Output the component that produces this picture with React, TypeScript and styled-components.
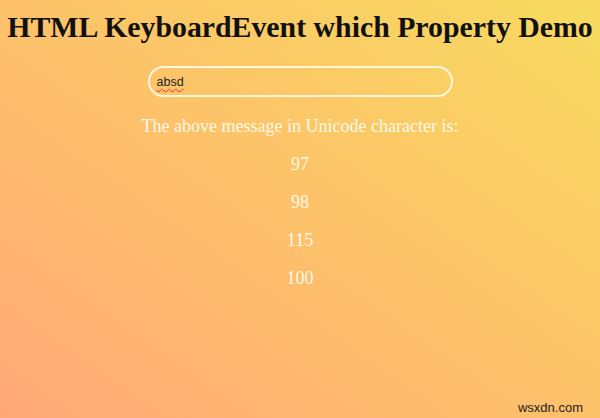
import React from 'react';
import styled, { createGlobalStyle } from 'styled-components';

const GlobalStyle = createGlobalStyle`
  html, body {
    margin: 0;
    padding: 0;
  }
  body {
    font-family: "Liberation Serif", "Times New Roman", serif;
  }
`;

const Page = styled.div`
  position: relative;
  width: 600px;
  height: 418px;
  overflow: hidden;
  background: linear-gradient(to top right, #ffa878 0%, #fdc26a 50%, #f7db5f 100%);
  display: flex;
  flex-direction: column;
  align-items: center;
  color: #fff8e6;
`;

const Title = styled.h1`
  margin: 10px 0 0;
  font-size: 29.8px;
  line-height: 34px;
  font-weight: bold;
  color: #111;
  text-align: center;
`;

const Field = styled.div`
  margin-top: 22px;
  width: 305px;
  height: 31px;
  box-sizing: border-box;
  border: 2px solid #fff6dc;
  border-radius: 16px;
  background: transparent;
  padding: 0 7px;
  display: flex;
  align-items: center;
  font-family: "Liberation Sans", Arial, sans-serif;
  font-size: 12.5px;
  color: #222;
`;

const Typed = styled.span`
  text-decoration: underline wavy #d33;
  text-decoration-thickness: 1px;
  text-underline-offset: 2px;
`;

const Message = styled.p`
  margin: 19px 0 0;
  font-size: 18px;
  line-height: 21px;
  text-align: center;
`;

const Code = styled.p`
  margin: 17px 0 0;
  font-size: 18px;
  line-height: 21px;
  text-align: center;
`;

const Watermark = styled.span`
  position: absolute;
  right: 17px;
  bottom: 3px;
  font-family: "Liberation Sans", Arial, sans-serif;
  font-size: 13px;
  color: #222;
`;

const text = 'absd';

export default function App() {
  return (
    <>
      <GlobalStyle />
      <Page>
        <Title>HTML KeyboardEvent which Property Demo</Title>
        <Field>
          <Typed>{text}</Typed>
        </Field>
        <Message>The above message in Unicode character is:</Message>
        {text.split('').map((ch, i) => (
          <Code key={i}>{ch.charCodeAt(0)}</Code>
        ))}
        <Watermark>wsxdn.com</Watermark>
      </Page>
    </>
  );
}
